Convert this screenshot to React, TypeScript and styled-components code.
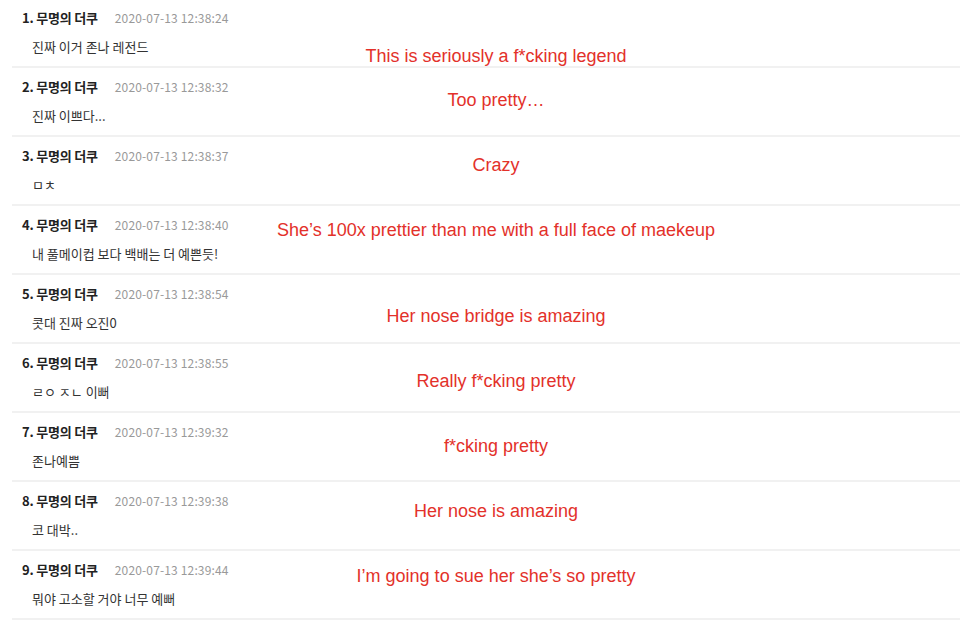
import React from "react";
import styled, { createGlobalStyle } from "styled-components";

const Global = createGlobalStyle`
  html, body { margin: 0; padding: 0; background: #fff; }
  body { font-family: "Noto Sans CJK KR", "Noto Sans", sans-serif; }
`;

const List = styled.ul`
  list-style: none;
  margin: 0;
  padding: 0;
  width: 960px;
`;

const Row = styled.li`
  position: relative;
  margin-left: 12px;
  padding: 8px 0 9px 10px;
  border-bottom: 2px solid #f1f1f1;
  margin-bottom: 1px;
`;

const Header = styled.div`
  display: flex;
  align-items: baseline;
  height: 20px;
  line-height: 20px;
`;

const Name = styled.span`
  font-size: 13px;
  font-weight: 700;
  color: #222;
  letter-spacing: -0.2px;
`;

const Date = styled.span`
  margin-left: 17px;
  font-size: 12px;
  letter-spacing: 0.15px;
  color: #999;
`;

const Body = styled.p`
  margin: 9px 0 0 10px;
  height: 20px;
  line-height: 20px;
  font-size: 13px;
  color: #333;
`;

const Note = styled.span<{ $top: number }>`
  position: absolute;
  left: 484px;
  top: ${(p) => p.$top}px;
  transform: translateX(-50%);
  white-space: nowrap;
  font-family: "Liberation Sans", Arial, sans-serif;
  font-size: 18px;
  line-height: 20px;
  color: #e3312a;
`;

const comments = [
  { date: "2020-07-13 12:38:24", text: "진짜 이거 존나 레전드", note: "This is seriously a f*cking legend", top: 46 },
  { date: "2020-07-13 12:38:32", text: "진짜 이쁘다...", note: "Too pretty…", top: 21 },
  { date: "2020-07-13 12:38:37", text: "ㅁㅊ", note: "Crazy", top: 17 },
  { date: "2020-07-13 12:38:40", text: "내 풀메이컵 보다 백배는 더 예쁜듯!", note: "She’s 100x prettier than me with a full face of maekeup", top: 13 },
  { date: "2020-07-13 12:38:54", text: "콧대 진짜 오진0", note: "Her nose bridge is amazing", top: 30 },
  { date: "2020-07-13 12:38:55", text: "ㄹㅇ ㅈㄴ 이뻐", note: "Really f*cking pretty", top: 26 },
  { date: "2020-07-13 12:39:32", text: "존나예쁨", note: "f*cking pretty", top: 22 },
  { date: "2020-07-13 12:39:38", text: "코 대박..", note: "Her nose is amazing", top: 18 },
  { date: "2020-07-13 12:39:44", text: "뭐야 고소할 거야 너무 예뻐", note: "I’m going to sue her she’s so pretty", top: 14 },
];

export default function App() {
  return (
    <>
      <Global />
      <List>
        {comments.map((c, i) => (
          <Row key={i}>
            <Header>
              <Name>{i + 1}. 무명의 더쿠</Name>
              <Date>{c.date}</Date>
            </Header>
            <Body>{c.text}</Body>
            <Note $top={c.top}>{c.note}</Note>
          </Row>
        ))}
      </List>
    </>
  );
}
